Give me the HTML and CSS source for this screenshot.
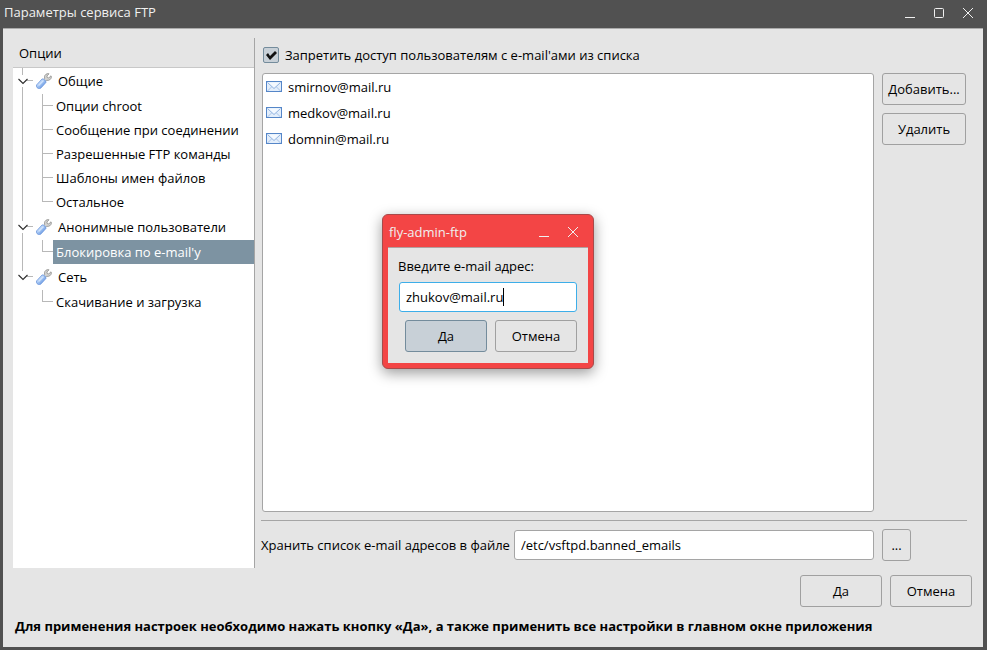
FILE: index.html
```html
<!DOCTYPE html>
<html lang="ru">
<head>
    <meta charset="UTF-8">
    <meta name="viewport" content="width=device-width, initial-scale=1.0">
    <title>Параметры сервиса FTP</title>
    <link rel="stylesheet" href="styles.css">
</head>
<body>
    <svg class="defs" aria-hidden="true">
        <defs>
            <linearGradient id="handle" x1="0" y1="0" x2="1" y2="1">
                <stop offset="0.3" stop-color="#c4dcfa"/>
                <stop offset="0.75" stop-color="#6f9ee6"/>
            </linearGradient>
            <symbol id="wrench" viewBox="0 0 16 16">
                <path d="M7.4 6.6 8.7 5.4C8 3.2 9 1.2 11.6.6L13 .8 10.9 3 11.2 4.6 12.8 4.9 15 2.8 15.4 3.9C15.2 6.4 13 7.8 10.6 7.3L9.3 8.6Z" fill="#d4d4d2" stroke="#959593" stroke-width=".9" stroke-linejoin="round"/>
                <path d="M6 6C7.400 5.200 10.500 8 9.900 9.500L5 14.900C3.200 16.400 0 15.200.5 12Z" fill="url(#handle)" stroke="#6b96dc" stroke-width=".8" stroke-linejoin="round"/>
                <path d="M3 12 7 8" stroke="#d0e3fc" stroke-width="1.4" stroke-linecap="round"/>
            </symbol>
            <symbol id="twisty" viewBox="0 0 12 12">
                <path d="M1.500 4 6 8.500l4.500-4.500" fill="none" stroke="#2c2c2c" stroke-width="1.1"/>
            </symbol>
            <symbol id="mail" viewBox="0 0 16 12">
                <rect x=".5" y=".5" width="15" height="10" fill="#e3eefb" stroke="#5586c8"/>
                <path d="M1.500 10 6 5.500M14.500 10 10 5.500" fill="none" stroke="#a9c4e8"/>
                <path d="M1.500 1.500 8 7.500l6.500-6" fill="#f4f9ff" stroke="#8fb2e0"/>
            </symbol>
            <symbol id="minimize" viewBox="0 0 12 12">
                <path d="M1 10.500h10" stroke="currentColor"/>
            </symbol>
            <symbol id="maximize" viewBox="0 0 12 12">
                <rect x="1.500" y="1.500" width="9" height="9" rx="1" fill="none" stroke="currentColor"/>
            </symbol>
            <symbol id="close" viewBox="0 0 12 12">
                <path d="M1 1l10 10M11 1 1 11" stroke="currentColor"/>
            </symbol>
        </defs>
    </svg>

    <div class="window">
        <header class="titlebar">
            <h1>Параметры сервиса FTP</h1>
            <div class="window-controls">
                <button type="button" aria-label="Свернуть"><svg><use href="#minimize"/></svg></button>
                <button type="button" aria-label="Развернуть"><svg><use href="#maximize"/></svg></button>
                <button type="button" aria-label="Закрыть"><svg><use href="#close"/></svg></button>
            </div>
        </header>

        <main class="content">
            <div class="panes">
                <nav class="options">
                    <h2>Опции</h2>
                    <ul class="tree">
                        <li class="branch">
                            <div class="branch-row">
                                <button type="button" class="twisty" aria-expanded="true" aria-label="Общие"><svg><use href="#twisty"/></svg></button>
                                <svg class="wrench"><use href="#wrench"/></svg>
                                <a href="#general">Общие</a>
                            </div>
                            <ul class="leaves">
                                <li><a href="#chroot">Опции chroot</a></li>
                                <li><a href="#banner">Сообщение при соединении</a></li>
                                <li><a href="#commands">Разрешенные FTP команды</a></li>
                                <li><a href="#patterns">Шаблоны имен файлов</a></li>
                                <li><a href="#other">Остальное</a></li>
                            </ul>
                        </li>
                        <li class="branch">
                            <div class="branch-row">
                                <button type="button" class="twisty" aria-expanded="true" aria-label="Анонимные пользователи"><svg><use href="#twisty"/></svg></button>
                                <svg class="wrench"><use href="#wrench"/></svg>
                                <a href="#anonymous">Анонимные пользователи</a>
                            </div>
                            <ul class="leaves">
                                <li><a href="#block" class="selected">Блокировка по e-mail'у</a></li>
                            </ul>
                        </li>
                        <li class="branch">
                            <div class="branch-row">
                                <button type="button" class="twisty" aria-expanded="true" aria-label="Сеть"><svg><use href="#twisty"/></svg></button>
                                <svg class="wrench"><use href="#wrench"/></svg>
                                <a href="#network">Сеть</a>
                            </div>
                            <ul class="leaves">
                                <li><a href="#transfer">Скачивание и загрузка</a></li>
                            </ul>
                        </li>
                    </ul>
                </nav>

                <section class="settings">
                    <div class="check-row">
                        <input type="checkbox" id="deny" checked>
                        <label for="deny">Запретить доступ пользователям с e-mail'ами из списка</label>
                    </div>
                    <div class="list-row">
                        <ul class="emails">
                            <li><svg><use href="#mail"/></svg>smirnov@mail.ru</li>
                            <li><svg><use href="#mail"/></svg>medkov@mail.ru</li>
                            <li><svg><use href="#mail"/></svg>domnin@mail.ru</li>
                        </ul>
                        <div class="list-buttons">
                            <button type="button" class="btn">Добавить...</button>
                            <button type="button" class="btn">Удалить</button>
                        </div>
                    </div>
                    <div class="file-row">
                        <label for="file">Хранить список e-mail адресов в файле</label>
                        <input type="text" id="file" class="field" value="/etc/vsftpd.banned_emails">
                        <div class="browse"><button type="button" class="btn">...</button></div>
                    </div>
                </section>
            </div>

            <div class="actions">
                <button type="button" class="btn">Да</button>
                <button type="button" class="btn">Отмена</button>
            </div>
            <p class="note">Для применения настроек необходимо нажать кнопку «Да», а также применить все настройки в главном окне приложения</p>
        </main>
    </div>

    <div class="dialog" role="dialog" aria-labelledby="dialog-title">
        <header class="titlebar">
            <h2 id="dialog-title">fly-admin-ftp</h2>
            <div class="window-controls">
                <button type="button" aria-label="Свернуть"><svg><use href="#minimize"/></svg></button>
                <button type="button" aria-label="Закрыть"><svg><use href="#close"/></svg></button>
            </div>
        </header>
        <form class="dialog-body">
            <label for="email">Введите e-mail адрес:</label>
            <div class="field focused">
                <input type="text" id="email" value="zhukov@mail.ru">
                <span class="caret"></span>
            </div>
            <div class="dialog-actions">
                <button type="button" class="btn default">Да</button>
                <button type="button" class="btn">Отмена</button>
            </div>
        </form>
    </div>
</body>
</html>
```
FILE: styles.css
```css
* {
    box-sizing: border-box;
}

body {
    margin: 0;
    font-family: "Open Sans", "Noto Sans", sans-serif;
    font-size: 13px;
    line-height: 18px;
    color: #000;
}

h1, h2, p, ul {
    margin: 0;
    padding: 0;
    font-size: 13px;
    font-weight: normal;
    list-style: none;
}

a {
    color: inherit;
    text-decoration: none;
}

button, input {
    font: inherit;
    color: inherit;
}

.defs {
    position: absolute;
    width: 0;
    height: 0;
}

/* main window */
.window {
    display: flex;
    flex-direction: column;
    min-height: 100vh;
    padding: 0 4px 3px 3px;
    background: #515151;
}

.titlebar {
    display: flex;
    align-items: center;
    justify-content: space-between;
    height: 28px;
    padding: 0 9px 2px 1px;
    color: #f0f0f0;
}

.titlebar h1 {
    padding-bottom: 2px;
}

.window-controls {
    display: flex;
    gap: 17px;
}

.window-controls button {
    display: flex;
    padding: 0;
    border: 0;
    background: none;
}

.window-controls svg {
    width: 12px;
    height: 12px;
}

.content {
    display: flex;
    flex: 1;
    flex-direction: column;
    padding: 9px 11px 12px 10px;
    border-top: 1px solid #aaa;
    background: #e5e5e5;
}

.panes {
    display: flex;
    flex: 1;
    gap: 6px;
}

/* options tree */
.options {
    display: flex;
    flex-direction: column;
    width: 242px;
    border-right: 1px solid #a5a5a5;
}

.options h2 {
    padding: 6px 6px 5px;
    border-bottom: 1px solid #c8c8c8;
}

.tree {
    flex: 1;
    background: #fff;
}

.branch {
    background: linear-gradient(#b8b8b8, #b8b8b8) 9px 0 / 1px 100% no-repeat;
}

.branch:last-child {
    background-size: 1px 12px;
}

.branch-row {
    display: flex;
    align-items: center;
    height: 26px;
    background: linear-gradient(#b8b8b8, #b8b8b8) 14px 12px / 6px 1px no-repeat;
}

.twisty {
    display: flex;
    margin: 0 7px 0 4px;
    padding: 0;
    border: 0;
    background: none;
}

.twisty svg {
    width: 12px;
    height: 12px;
    background: linear-gradient(#fff, #fff) 3px 0 / 6px 12px no-repeat;
}

.wrench {
    width: 16px;
    height: 16px;
    margin-right: 6px;
}

.leaves li {
    padding-left: 40px;
    background:
        linear-gradient(#b8b8b8, #b8b8b8) 29px 0 / 1px 100% no-repeat,
        linear-gradient(#b8b8b8, #b8b8b8) 29px 11px / 11px 1px no-repeat;
}

.leaves li:last-child {
    background-size: 1px 12px, 11px 1px;
}

.leaves a {
    display: block;
    padding: 3px;
}

.leaves .selected {
    background: #7d93a2;
    color: #fff;
}

/* settings */
.settings {
    display: flex;
    flex: 1;
    flex-direction: column;
    padding: 8px 5px 7px 0;
}

.check-row {
    display: flex;
    align-items: center;
    gap: 6px;
    padding-left: 2px;
}

.check-row input {
    appearance: none;
    width: 16px;
    height: 16px;
    margin: 0;
    border: 1px solid #748c9c;
    border-radius: 2px;
    background: #c8d0d7;
}

.check-row input:checked::before {
    content: "";
    display: block;
    width: 14px;
    height: 14px;
    background: #111;
    clip-path: polygon(2px 7px, 4px 5px, 6px 8px, 11px 3px, 13px 5px, 6px 12px);
}

.list-row {
    display: flex;
    flex: 1;
    gap: 8px;
    padding: 9px 1px 8px;
}

.emails {
    flex: 1;
    padding: 0 3px;
    border: 1px solid #a5a5a5;
    border-radius: 3px;
    background: #fff;
}

.emails li {
    display: flex;
    align-items: center;
    gap: 6px;
    height: 26px;
}

.emails svg {
    width: 16px;
    height: 12px;
}

.list-buttons {
    display: flex;
    flex-direction: column;
    gap: 8px;
    width: 84px;
}

.btn {
    height: 32px;
    padding: 0 2px;
    border: 1px solid #a0a0a0;
    border-radius: 3px;
    background: #e5e5e5;
}

.btn.default {
    border-color: #748c9c;
    background: #c8d0d7;
}

.field {
    height: 30px;
    padding: 0 6px;
    border: 1px solid #a5a5a5;
    border-radius: 3px;
    background: #fff;
}

.file-row {
    display: flex;
    align-items: center;
    gap: 4px;
    padding: 8px 1px 0 0;
    border-top: 1px solid #a5a5a5;
}

.file-row .field {
    flex: 1;
    min-width: 0;
}

.browse {
    width: 88px;
    padding-left: 4px;
}

.browse .btn {
    width: 29px;
}

.actions, .dialog-actions {
    display: flex;
    justify-content: flex-end;
    gap: 8px;
}

.actions {
    padding: 7px 0 10px;
}

.actions .btn, .dialog-actions .btn {
    width: 82px;
}

.note {
    padding-left: 2px;
    font-weight: bold;
}

/* e-mail dialog */
.dialog {
    position: absolute;
    top: 214px;
    left: 382px;
    width: 212px;
    padding: 0 5px 5px;
    border: 1px solid #a84a4a;
    border-radius: 6px;
    background: #f34545;
    box-shadow: 0 4px 14px rgba(0, 0, 0, 0.4);
}

.dialog .titlebar {
    height: 32px;
    padding: 2px 9px 0 1px;
}

.dialog-body {
    display: flex;
    flex-direction: column;
    padding: 9px 11px 11px;
    border-top: 1px solid #b0a0a0;
    background: #e5e5e5;
}

.dialog-body label {
    margin: 0 0 7px -1px;
}

.focused {
    display: flex;
    align-items: center;
    margin-bottom: 8px;
    border-color: #3daee9;
}

.focused input {
    field-sizing: content;
    padding: 0;
    border: 0;
    outline: 0;
}

.caret {
    width: 1px;
    height: 18px;
    background: #000;
}
```
